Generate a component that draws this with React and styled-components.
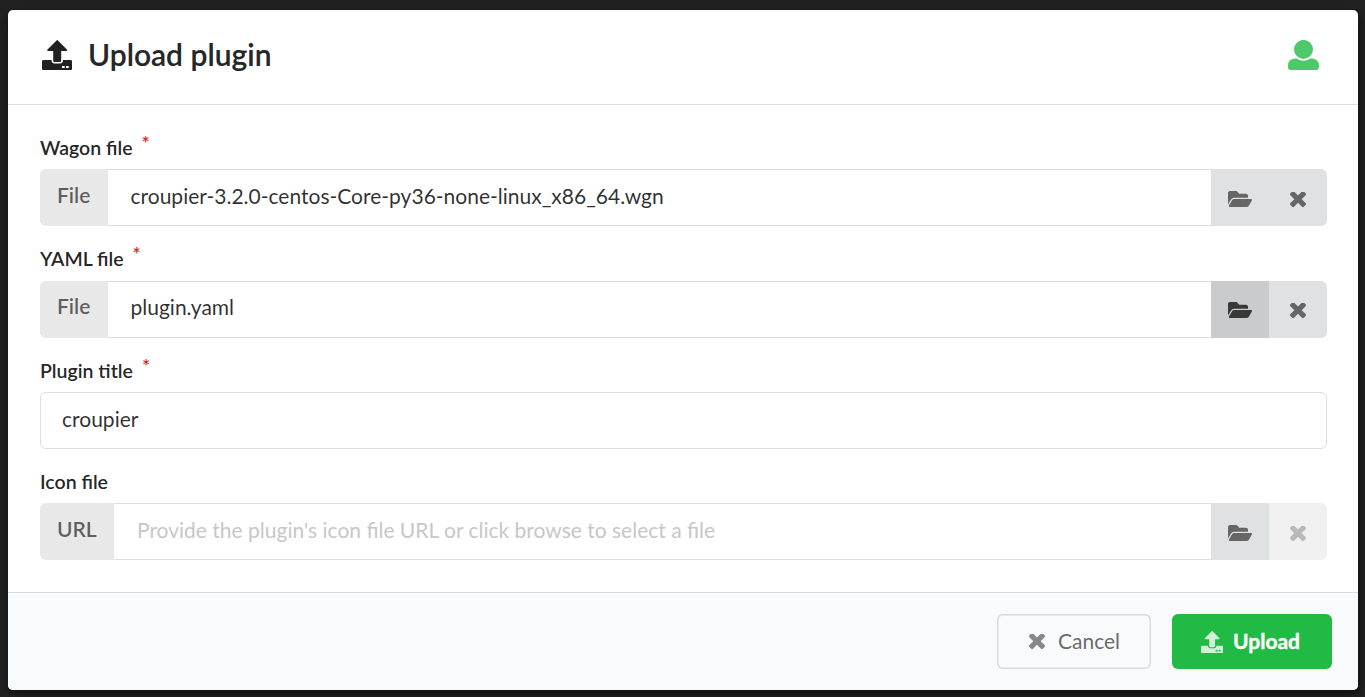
import React from 'react';
import styled, { createGlobalStyle } from 'styled-components';
import { FaFolderOpen } from 'react-icons/fa';

const GlobalStyle = createGlobalStyle`
  * { box-sizing: border-box; }
  body {
    margin: 0;
    background: #222;
    font-family: Lato, "Liberation Sans", sans-serif;
    color: rgba(0, 0, 0, 0.87);
    overflow: hidden;
  }
`;

const Page = styled.div`
  height: 697px;
  padding: 10px 7px 7px 8px;
`;

const Modal = styled.section`
  height: 680px;
  display: flex;
  flex-direction: column;
  background: #fff;
  border-radius: 5px;
  overflow: hidden;
  box-shadow: 1px 4px 4px rgba(0, 0, 0, 0.3), 1px 4px 16px 2px rgba(0, 0, 0, 0.3);
`;

const Header = styled.header`
  height: 95px;
  display: flex;
  align-items: center;
  padding: 0 39px 4px 34.300px;
  border-bottom: 1px solid #dedede;
`;

const Title = styled.h1`
  margin: 0 auto 0 15.700px;
  padding-bottom: 2px;
  font-size: 30px;
  line-height: 36px;
  font-weight: 600;
  -webkit-text-stroke: 0.2px currentColor;
`;

const Body = styled.form`
  flex: 1;
  display: flex;
  flex-direction: column;
  padding: 32px 31px 0 32px;
`;

const Field = styled.div`
  height: 111.330px;
`;

const Label = styled.label`
  display: flex;
  height: 32.200px;
  font-size: 19.5px;
  line-height: 22px;
  font-weight: 600;
`;

const Required = styled.span`
  margin: -5px 0 0 9px;
  font-weight: 600;
  color: #e02525;
`;

const InputRow = styled.div`
  display: flex;
  height: 57px;
`;

const Tag = styled.div`
  width: ${(p) => p.$width}px;
  padding: 13.800px 0 0 17px;
  border-radius: 6px 0 0 6px;
  background: #e8e8e8;
  color: rgba(0, 0, 0, 0.6);
  font-size: 21px;
  line-height: 24px;
  font-weight: 600;
`;

const Input = styled.input`
  flex: 1;
  min-width: 0;
  border: 1px solid #dededf;
  border-width: ${(p) => (p.$joined ? '1px 0' : '1px')};
  border-radius: ${(p) => (p.$joined ? '0' : '6px')};
  padding: 0 22px 4.600px ${(p) => (p.$joined ? (p.placeholder ? 23 : 22.5) : 21)}px;
  font: 400 21px Lato, sans-serif;
  color: rgba(0, 0, 0, 0.82);
  background: #fff;
  outline: none;
  &::placeholder { color: #c7c7c7; }
`;

const IconButton = styled.button`
  width: 58px;
  border: 0;
  padding: ${(p) => (p.$browse ? '2px 1px 0 0' : '4px 1px 0 0')};
  display: flex;
  align-items: center;
  justify-content: center;
  background: ${(p) => (p.$active ? '#cacbcd' : p.disabled ? '#f0f0f0' : '#e0e1e2')};
  color: ${(p) => (p.$active ? '#393939' : p.disabled ? '#b9b9b9' : '#666')};
  &:last-child { border-radius: 0 6px 6px 0; }
`;

const Footer = styled.footer`
  height: 98px;
  display: flex;
  justify-content: flex-end;
  gap: 21px;
  padding: 21px 26px 0;
  background: #f9fafb;
  border-top: 1px solid #d9dadb;
`;

const ActionButton = styled.button`
  width: ${(p) => (p.$primary ? 160 : 154)}px;
  height: 55px;
  display: flex;
  align-items: center;
  padding: 0 0 0 ${(p) => (p.$primary ? 29 : 31.5)}px;
  gap: ${(p) => (p.$primary ? 10 : 13.5)}px;
  border: 0;
  box-shadow: ${(p) => (p.$primary ? 'none' : 'inset 0 0 0 1.5px #d9dadb')};
  border-radius: 6px;
  background: ${(p) => (p.$primary ? '#21ba45' : 'transparent')};
  color: ${(p) => (p.$primary ? '#fff' : '#6b6c6c')};
  font: ${(p) => (p.$primary ? 700 : 400)} 21px Lato, sans-serif;
  svg { opacity: 0.8; }
`;

const ButtonText = styled.span`
  padding-bottom: 2px;
  -webkit-text-stroke: ${(p) => (p.$strong ? '0.4px currentColor' : '0')};
`;

const UploadIcon = ({ size }) => (
  <svg width={size} height={size} viewBox="0 0 30 30" fill="currentColor">
    <path d="M14.500.400a1 1 0 0 1 1.400 0l9 9.200c.6.6.3 1.500-.6 1.500H19.200v9.300c0 1-.6 1.600-1.600 1.600h-4.800c-1 0-1.600-.6-1.600-1.600v-9.300H6.100c-.9 0-1.200-.9-.6-1.500z" />
    <path fillRule="evenodd" d="M1.500 20h8c0 2.200 1.100 3.400 3 3.400h5.500c1.900 0 3-1.200 3-3.400h7.500c1 0 1.500.5 1.500 1.500v7c0 1-.5 1.500-1.500 1.500h-27C.5 30 0 29.500 0 28.500v-7C0 20.500.5 20 1.500 20ZM20 25.900v2.200h2.700v-2.200ZM24 25.900v2.200h2.700v-2.200Z" />
  </svg>
);

const UserIcon = () => (
  <svg width="31" height="30" viewBox="0 0 31 30" fill="#4dc86a">
    <circle cx="15.5" cy="9.4" r="9.5" />
    <path d="M8.5 18.500q7 4.500 14 0C28 18.500 31 21 31 25.500V27q0 3-3 3H3q-3 0-3-3v-1.500C0 21 3 18.500 8.500 18.500Z" />
  </svg>
);

const CloseIcon = () => (
  <svg width="16" height="16" viewBox="302 434 1188 1188" fill="currentColor">
    <path transform="translate(0 4)" d="M1490 1322q0 40-28 68l-136 136q-28 28-68 28t-68-28l-294-294-294 294q-28 28-68 28t-68-28l-136-136q-28-28-28-68t28-68l294-294-294-294q-28-28-28-68t28-68l136-136q28-28 68-28t68 28l294 294 294-294q28-28 68-28t68 28l136 136q28 28 28 68t-28 68l-294 294 294 294q28 28 28 68z" />
  </svg>
);

const FileField = ({ label, required, tag, tagWidth, value, placeholder, active, clearDisabled }) => (
  <Field>
    <Label>{label}{required && <Required>*</Required>}</Label>
    <InputRow>
      <Tag $width={tagWidth}>{tag}</Tag>
      <Input $joined defaultValue={value} placeholder={placeholder} />
      <IconButton type="button" $browse $active={active}><FaFolderOpen size={24} /></IconButton>
      <IconButton type="button" disabled={clearDisabled}><CloseIcon /></IconButton>
    </InputRow>
  </Field>
);

export default function App() {
  return (
    <Page>
      <GlobalStyle />
      <Modal>
        <Header>
          <UploadIcon size={30} />
          <Title>Upload plugin</Title>
          <UserIcon />
        </Header>
        <Body>
          <FileField label="Wagon file" required tag="File" tagWidth={68} value="croupier-3.2.0-centos-Core-py36-none-linux_x86_64.wgn" />
          <FileField label="YAML file" required tag="File" tagWidth={68} value="plugin.yaml" active />
          <Field>
            <Label>Plugin title<Required>*</Required></Label>
            <InputRow><Input defaultValue="croupier" /></InputRow>
          </Field>
          <FileField label="Icon file" tag="URL" tagWidth={74} placeholder="Provide the plugin's icon file URL or click browse to select a file" clearDisabled />
        </Body>
        <Footer>
          <ActionButton><CloseIcon /><ButtonText>Cancel</ButtonText></ActionButton>
          <ActionButton $primary><UploadIcon size={22} /><ButtonText $strong>Upload</ButtonText></ActionButton>
        </Footer>
      </Modal>
    </Page>
  );
}
